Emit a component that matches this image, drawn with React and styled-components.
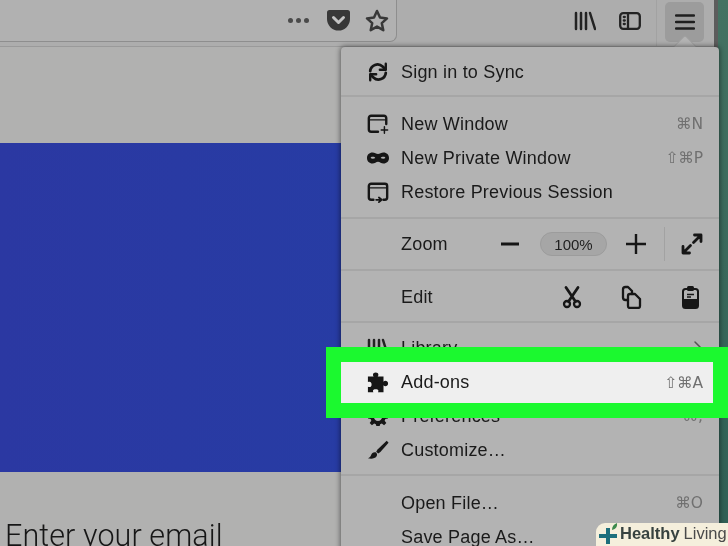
import React from 'react';
import styled, { createGlobalStyle } from 'styled-components';

const GlobalStyle = createGlobalStyle`
  html, body {
    margin: 0;
    padding: 0;
    background: #3f6e60;
  }
  #root {
    width: 728px;
    height: 546px;
    overflow: hidden;
  }
`;

const Page = styled.div`
  position: relative;
  display: flex;
  width: 728px;
  height: 546px;
  overflow: hidden;
  font-family: "Liberation Sans", Arial, sans-serif;
  filter: blur(0.35px);
`;

const Browser = styled.div`
  display: flex;
  flex-direction: column;
  width: 714px;
  flex: none;
  border-right: 4px solid #5c5c5c;
  background: #b1b1b0;
`;

const Desktop = styled.div`
  flex: 1;
  background: linear-gradient(#447262, #2f5f55);
`;

const Toolbar = styled.div`
  display: flex;
  height: 46px;
  flex: none;
  align-items: flex-start;
  background: #adadad;
  border-bottom: 1px solid #9a9a9a;
`;

const UrlBar = styled.div`
  display: flex;
  align-items: center;
  justify-content: flex-end;
  width: 397px;
  height: 42px;
  box-sizing: border-box;
  padding-right: 7px;
  background: #b1b1b1;
  border: 1px solid #8e8e8e;
  border-width: 0 1px 1px 0;
  border-radius: 0 0 7px 0;
`;

const Dots = styled.div`
  display: flex;
  gap: 3px;
  margin-right: 18px;
`;

const Dot = styled.span`
  width: 5px;
  height: 5px;
  border-radius: 50%;
  background: #4a4a4a;
`;

const UrlButton = styled.div`
  display: flex;
  margin-left: ${p => p.$gap || 0}px;
`;

const ToolGroup = styled.div`
  display: flex;
  flex: 1;
  align-items: center;
  height: 42px;
  padding-left: 177px;
`;

const ToolIcon = styled.div`
  display: flex;
  width: 22px;
  margin-right: ${p => p.$gap || 0}px;
`;

const ToolSeparator = styled.div`
  width: 1px;
  height: 46px;
  margin: 0 8px 0 15px;
  background: #a2a2a2;
  align-self: flex-start;
`;

const MenuButton = styled.div`
  display: flex;
  align-items: center;
  justify-content: center;
  width: 39px;
  height: 40px;
  margin-top: 1px;
  border-radius: 5px;
  background: #9c9c9c;
`;

const Hero = styled.div`
  height: 329px;
  margin-top: 96px;
  flex: none;
  background: linear-gradient(90deg, #2b38a2, #2340a6);
`;

const EmailLabel = styled.div`
  padding: 47px 0 0 5px;
  font-family: Roboto, "Liberation Sans", sans-serif;
  font-weight: 300;
  font-size: 30.5px;
  letter-spacing: 0.1px;
  line-height: 34px;
  white-space: nowrap;
  color: #161616;
`;

const MenuArrow = styled.div`
  position: absolute;
  left: 676px;
  top: 38px;
  width: 18px;
  height: 18px;
  background: #b3b3b3;
  transform: rotate(45deg) scale(0.85);
  border-radius: 2px 0 0 0;
  box-shadow: -1px -1px 0 #a0a0a0;
`;

const Menu = styled.div`
  position: absolute;
  left: 341px;
  top: 47px;
  width: 378px;
  height: 520px;
  border-radius: 4px 4px 0 0;
  background: #b3b3b3;
  box-shadow: 0 0 5px 1px rgba(0, 0, 0, 0.45);
`;

const Section = styled.div`
  padding: ${p => p.$top}px 0 ${p => p.$bottom}px;
  border-bottom: ${p => (p.$last ? 'none' : '2px solid #a6a6a6')};
`;

const Row = styled.div`
  display: flex;
  align-items: center;
  height: 34px;
  padding-left: 26px;
  padding-right: ${p => p.$flush ? 0 : 16}px;
  font-size: 18px;
  letter-spacing: 0.2px;
  color: #1a1a1a;
`;

const HighlightRow = styled(Row)`
  position: relative;
  z-index: 2;
  height: 41px;
  margin: -3px 6px -4px 0;
  padding-right: 10px;
  background: #efefef;
  box-shadow: 0 0 0 15px #1bf92f;
`;

const IconSlot = styled.div`
  display: flex;
  align-items: center;
  justify-content: center;
  width: 22px;
  height: 24px;
  margin-right: 12px;
  flex: none;
`;

const Label = styled.span`
  flex: 1;
  white-space: nowrap;
`;

const Shortcut = styled.span`
  font-family: "DejaVu Sans", "Liberation Sans", sans-serif;
  font-size: 15.5px;
  letter-spacing: 0;
  color: #707070;
`;

const Slot = styled.div`
  display: flex;
  align-items: center;
  justify-content: center;
  width: ${p => p.$w}px;
  height: 34px;
  flex: none;
`;

const ZoomPill = styled.div`
  display: flex;
  align-items: center;
  justify-content: center;
  width: 67px;
  height: 24px;
  box-sizing: border-box;
  flex: none;
  border: 1px solid #9c9c9c;
  border-radius: 12px;
  background: #a6a6a6;
  font-size: 15px;
  letter-spacing: 0;
  color: #1f1f1f;
`;

const VRule = styled.div`
  width: 1px;
  height: 34px;
  flex: none;
  background: #a2a2a2;
`;

const Badge = styled.div`
  position: absolute;
  left: 596px;
  top: 523px;
  z-index: 3;
  display: flex;
  align-items: center;
  width: 132px;
  height: 23px;
  padding: 0 0 2px 3px;
  box-sizing: border-box;
  border-radius: 9px 0 0 0;
  background: #f5efdc;
  font-size: 16.5px;
  white-space: nowrap;
  color: #4a4a4a;
`;

const BadgeBold = styled.b`
  margin-right: 4px;
  font-size: 16.5px;
  font-weight: 700;
  color: #37423f;
`;

const BadgeLogoSvg = styled.svg`
  align-self: flex-start;
  flex: none;
`;

const Glyph = ({ size = 24, w, h, vb, children, stroke = '#161616', sw = 2, fill = 'none' }) => (
  <svg width={w || size} height={h || size} viewBox={vb || '0 0 24 24'} fill={fill} stroke={stroke}
    strokeWidth={sw} strokeLinecap="round" strokeLinejoin="round">
    {children}
  </svg>
);

const LibraryIcon = () => (
  <Glyph w={22} h={22} vb="0 0 22 22" sw={2.5} stroke="#232323">
    <path d="M2 3v16M7 3v16M12 3v16M16 3l5 16" />
  </Glyph>
);

const SidebarIcon = () => (
  <Glyph w={22} h={18} vb="0 0 22 18" sw={2.3} stroke="#232323">
    <rect x="1.200" y="1.200" width="19.600" height="15.600" rx="3" />
    <path d="M9 1v16" />
    <path d="M4.800 5h1M4.800 8.500h1M4.800 12h1" />
  </Glyph>
);

const SyncIcon = () => (
  <Glyph sw={3}>
    <path d="M3.500 11a8 8 0 0 1 13.500-5l3 3" />
    <path d="M20.500 3v6.500H14" strokeWidth="2.600" />
    <path d="M20.500 13a8 8 0 0 1-13.500 5l-3-3" />
    <path d="M3.500 21v-6.500H10" strokeWidth="2.600" />
  </Glyph>
);

const NewWindowIcon = () => (
  <Glyph sw={2.600}>
    <path d="M21 12V5.500A2.500 2.500 0 0 0 18.500 3h-14A2.500 2.500 0 0 0 2 5.500V18a2.500 2.500 0 0 0 2.500 2.500H12" />
    <path d="M2 7.500h19" strokeWidth="1.600" />
    <path d="M19 15v7M15.500 18.500h7" strokeWidth="1.600" />
  </Glyph>
);

const MaskIcon = () => (
  <svg width="24" height="14" viewBox="0 0 24 14" fill="#161616">
    <path fillRule="evenodd" d="M6 1c2.500 0 4 1.500 6 1.500S15.500 1 18 1c3.500 0 6 2.500 6 6s-2.500 6-6 6c-2.500 0-4-2-6-2s-3.500 2-6 2c-3.500 0-6-2.500-6-6s2.500-6 6-6zM6 5.500C5 5.500 4 6 4 7c1 1 3.500 1 5 0 0-1-1.500-1.500-3-1.500zM18 5.500c-1.500 0-3 .5-3 1.500 1.500 1 4 1 5 0 0-1-1-1.500-2-1.500z" />
  </svg>
);

const RestoreIcon = () => (
  <Glyph sw={2.600}>
    <path d="M7 20.500H4.500A2.500 2.500 0 0 1 2 18V5.500A2.500 2.500 0 0 1 4.500 3h15A2.500 2.500 0 0 1 22 5.500V18a2.500 2.500 0 0 1-2.500 2.500H18" />
    <path d="M2 7.500h20" strokeWidth="1.600" />
    <path d="M10 20.500h6M13 18l3 2.500-3 2.500" strokeWidth="2" />
  </Glyph>
);

const MinusIcon = () => (
  <svg width="18" height="4" viewBox="0 0 18 4"><rect width="18" height="3" y="0.500" fill="#161616" /></svg>
);

const PlusIcon = () => (
  <Glyph w={20} h={20} vb="0 0 20 20" sw={2.400}><path d="M10 0v20M0 10h20" /></Glyph>
);

const ExpandIcon = () => (
  <Glyph sw={2.800}>
    <path d="M13.500 10.500L21 3M14.500 3H21v6.500" />
    <path d="M10.500 13.500L3 21M9.500 21H3v-6.500" />
  </Glyph>
);

const CutIcon = () => (
  <Glyph sw={2.300}>
    <circle cx="7" cy="19" r="3" />
    <circle cx="17" cy="19" r="3" />
    <path d="M8.500 16.500L18 2.500M15.500 16.500L6 2.500" strokeWidth="2.800" />
  </Glyph>
);

const CopyIcon = () => (
  <Glyph sw={2.300}>
    <path d="M9 15H6.500A2.500 2.500 0 0 1 4 12.500V4.500A2.500 2.500 0 0 1 6.500 2H9l4 4v3" />
    <path d="M11 9h5l5 5v7a2 2 0 0 1-2 2h-8a2 2 0 0 1-2-2v-10a2 2 0 0 1 2-2z" />
  </Glyph>
);

const PasteIcon = () => (
  <svg width="24" height="24" viewBox="0 0 24 24" fill="none">
    <path fill="#161616" d="M5 14h15v7a2 2 0 0 1-2 2H7a2 2 0 0 1-2-2z" />
    <rect x="5" y="4" width="15" height="19" rx="2.500" stroke="#161616" strokeWidth="2" />
    <rect x="9" y="1" width="7" height="5" rx="1.500" fill="#161616" />
    <path d="M9 9.500h7M9 12h4" stroke="#161616" strokeWidth="1.400" />
  </svg>
);

const ChevronIcon = () => (
  <Glyph w={10} h={16} vb="0 0 10 16" sw={1.500} stroke="#555"><path d="M2 2l6 6-6 6" /></Glyph>
);

const PuzzleIcon = () => (
  <svg width="24" height="24" viewBox="0 0 24 24" fill="#161616">
    <path d="M1 5h6.500C6 4 6 .5 9.500.5S13 4 11.500 5H18v5.500c1-1.500 5-1.500 5 2s-4 3.500-5 2V22h-6c.8-1 1-3.200-2.500-3.200S6.200 21 7 22H1v-6c2 1 4 .5 4-2.500s-2-3.500-4-2.500z" />
  </svg>
);

const GearIcon = () => (
  <svg width="20" height="20" viewBox="0 0 24 24" fill="#161616">
    <path fillRule="evenodd" d="M10 1h4l.6 3.200 2 .8L19.300 3 22 5.700l-2 2.700.8 2 3.200.6v4l-3.200.6-.8 2 2 2.700L19.300 23l-2.700-2-2 .8L14 24h-4l-.6-2.200-2-.8L4.700 23 2 20.300l2-2.700-.8-2L0 15v-4l3.200-.6.800-2L2 5.700 4.700 3l2.700 2 2-.8zM12 8a5 5 0 1 0 0 10 5 5 0 0 0 0-10z" />
  </svg>
);

const BrushIcon = () => (
  <svg width="24" height="24" viewBox="0 0 24 24" fill="#161616">
    <path d="M21.500 2L11.500 11.500l-1.500 2.400 2.200 2 2.400-1.700L23.500 4z" />
    <path d="M9.500 14.500c-2.500-.500-4.500 1-5 3-.4 1.500-1.800 2.800-3.500 3.500 3.500 1 7.700.5 9.300-1.800 1-1.500 1-3.500-.8-4.700z" />
  </svg>
);

const PocketIcon = () => (
  <svg width="23" height="21" viewBox="0 0 23 21">
    <path fill="#383838" d="M2.500 0h18A2.500 2.500 0 0 1 23 2.500V9a11.500 11.500 0 0 1-23 0V2.500A2.500 2.500 0 0 1 2.500 0z" />
    <path d="M6.500 7.500l5 5 5-5" fill="none" stroke="#c4c4c4" strokeWidth="3" strokeLinecap="round" strokeLinejoin="round" />
  </svg>
);

const StarIcon = () => (
  <Glyph sw={2.500} stroke="#383838">
    <path d="M12 2l3 6.600 7 .8-5.200 4.800 1.500 7L12 17.600 5.700 21.200l1.500-7L2 9.400l7-.8z" />
  </Glyph>
);

const HamburgerIcon = () => (
  <Glyph w={20} h={16} vb="0 0 20 16" sw={2.400} stroke="#1f1f1f">
    <path d="M1 1.500h18M1 8h18M1 14.500h18" />
  </Glyph>
);

const BadgeLogo = () => (
  <BadgeLogoSvg width="21" height="23" viewBox="0 0 21 23">
    <path d="M7 5h4v6h7v4h-7v6H7v-6H0v-4h7z" fill="#1d6f7c" />
    <path d="M13 7c0-3.500 1.500-5.500 5-7 .5 3.500-1 6-5 7z" fill="#3d8a4c" />
  </BadgeLogoSvg>
);

const App = () => (
  <>
    <GlobalStyle />
    <Page>
      <Browser>
        <Toolbar>
          <UrlBar>
            <Dots><Dot /><Dot /><Dot /></Dots>
            <UrlButton><PocketIcon /></UrlButton>
            <UrlButton $gap={15}><StarIcon /></UrlButton>
          </UrlBar>
          <ToolGroup>
            <ToolIcon $gap={23}><LibraryIcon /></ToolIcon>
            <ToolIcon><SidebarIcon /></ToolIcon>
            <ToolSeparator />
            <MenuButton><HamburgerIcon /></MenuButton>
          </ToolGroup>
        </Toolbar>
        <Hero />
        <EmailLabel>Enter your email</EmailLabel>
      </Browser>
      <Desktop />

      <MenuArrow />
      <Menu>
        <Section $top={8} $bottom={6}>
          <Row><IconSlot><SyncIcon /></IconSlot><Label>Sign in to Sync</Label></Row>
        </Section>
        <Section $top={10} $bottom={8}>
          <Row><IconSlot><NewWindowIcon /></IconSlot><Label>New Window</Label><Shortcut>⌘N</Shortcut></Row>
          <Row><IconSlot><MaskIcon /></IconSlot><Label>New Private Window</Label><Shortcut>⇧⌘P</Shortcut></Row>
          <Row><IconSlot><RestoreIcon /></IconSlot><Label>Restore Previous Session</Label></Row>
        </Section>
        <Section $top={8} $bottom={8}>
          <Row $flush>
            <IconSlot />
            <Label>Zoom</Label>
            <Slot $w={60}><MinusIcon /></Slot>
            <ZoomPill>100%</ZoomPill>
            <Slot $w={57}><PlusIcon /></Slot>
            <VRule />
            <Slot $w={54}><ExpandIcon /></Slot>
          </Row>
        </Section>
        <Section $top={9} $bottom={7}>
          <Row $flush>
            <IconSlot />
            <Label>Edit</Label>
            <Slot $w={59}><CutIcon /></Slot>
            <Slot $w={59}><CopyIcon /></Slot>
            <Slot $w={59}><PasteIcon /></Slot>
          </Row>
        </Section>
        <Section $top={8} $bottom={7}>
          <Row><IconSlot><LibraryIcon /></IconSlot><Label>Library</Label><ChevronIcon /></Row>
          <HighlightRow><IconSlot><PuzzleIcon /></IconSlot><Label>Add-ons</Label><Shortcut>⇧⌘A</Shortcut></HighlightRow>
          <Row><IconSlot><GearIcon /></IconSlot><Label>Preferences</Label><Shortcut>⌘,</Shortcut></Row>
          <Row><IconSlot><BrushIcon /></IconSlot><Label>Customize…</Label></Row>
        </Section>
        <Section $top={10} $bottom={0} $last>
          <Row><IconSlot /><Label>Open File…</Label><Shortcut>⌘O</Shortcut></Row>
          <Row><IconSlot /><Label>Save Page As…</Label></Row>
        </Section>
      </Menu>
      <Badge>
        <BadgeLogo />
        <BadgeBold>Healthy</BadgeBold>Living
      </Badge>
    </Page>
  </>
);

export default App;
